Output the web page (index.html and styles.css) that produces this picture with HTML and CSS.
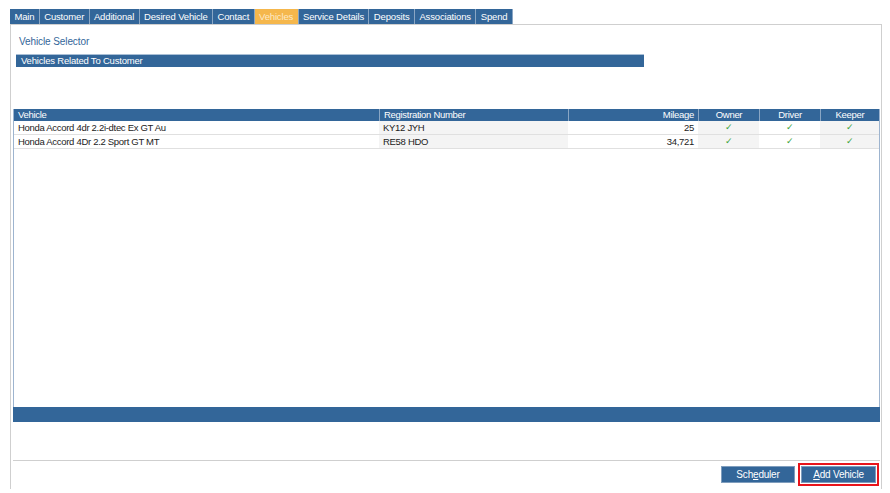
FILE: index.html
```html
<!DOCTYPE html>
<html>
<head>
<meta charset="utf-8">
<link rel="stylesheet" href="styles.css">
</head>
<body>
<div class="page">
  <div class="tabs">
    <div class="tab">Main</div>
    <div class="tab">Customer</div>
    <div class="tab">Additional</div>
    <div class="tab">Desired Vehicle</div>
    <div class="tab">Contact</div>
    <div class="tab active">Vehicles</div>
    <div class="tab">Service Details</div>
    <div class="tab">Deposits</div>
    <div class="tab">Associations</div>
    <div class="tab">Spend</div>
  </div>
  <div class="panel">
    <div class="title">Vehicle Selector</div>
    <div class="section">Vehicles Related To Customer</div>
    <div class="grid">
      <div class="row head">
        <div class="c c1">Vehicle</div>
        <div class="c c2">Registration Number</div>
        <div class="c c3">Mileage</div>
        <div class="c c4">Owner</div>
        <div class="c c5">Driver</div>
        <div class="c c6">Keeper</div>
      </div>
      <div class="row">
        <div class="c c1">Honda Accord 4dr 2.2i-dtec Ex GT Au</div>
        <div class="c c2 alt">KY12 JYH</div>
        <div class="c c3">25</div>
        <div class="c c4 alt chk">&#10003;</div>
        <div class="c c5 chk">&#10003;</div>
        <div class="c c6 alt chk">&#10003;</div>
      </div>
      <div class="row">
        <div class="c c1">Honda Accord 4Dr 2.2 Sport GT MT</div>
        <div class="c c2 alt">RE58 HDO</div>
        <div class="c c3">34,721</div>
        <div class="c c4 alt chk">&#10003;</div>
        <div class="c c5 chk">&#10003;</div>
        <div class="c c6 alt chk">&#10003;</div>
      </div>
      <div class="spacer"></div>
      <div class="foot"></div>
    </div>
    <div class="actions">
      <div class="btn">Sch<u>e</u>duler</div>
      <div class="focus"><div class="btn"><u>A</u>dd Vehicle</div></div>
    </div>
  </div>
</div>
</body>
</html>
```
FILE: styles.css
```css
* { box-sizing: border-box; }
html, body { margin: 0; padding: 0; background: #fff; }
body {
  font-family: "Liberation Sans", Arial, sans-serif;
  font-size: 9.5px;
  letter-spacing: -0.3px;
  color: #222;
  width: 890px;
  height: 493px;
  overflow: hidden;
}
.page { padding: 9px 0 0 10px; }
.tabs { display: flex; height: 15px; }
.tab {
  background: #336699;
  color: #fff;
  padding: 0 4.4px;
  line-height: 15px;
  border-right: 1px solid #8aa6c4;
  letter-spacing: -0.15px;
  font-size: 9.5px;
}
.tab.active { background: #f5b74c; color: #fde9c6; }
.panel {
  width: 872px;
  height: 465px;
  border: 1px solid #cfcfcf;
  border-bottom: none;
  padding: 0 1px 0 2px;
  display: flex;
  flex-direction: column;
}
.title {
  color: #336699;
  font-size: 10px;
  letter-spacing: -0.1px;
  margin: 10px 0 0 6px;
  line-height: 13px;
  height: 19px;
}
.section {
  margin-left: 3px;
  width: 628px;
  height: 13px;
  background: #336699;
  border-top: 1px solid #a9bfd6;
  color: #fff;
  line-height: 12px;
  padding-left: 5px;
  font-size: 9.5px;
  letter-spacing: -0.2px;
}
.grid {
  margin-top: 42px;
  height: 313px;
  display: flex;
  flex-direction: column;
  border-left: 1px solid #9db4cf;
  border-right: 1px solid #9db4cf;
}
.row { display: flex; height: 14px; border-bottom: 1px solid #e0e0e0; }
.row.head { height: 12px; background: #336699; color: #fff; border-bottom: none; }
.c { line-height: 13px; padding: 0 4px; white-space: nowrap; overflow: hidden; }
.head .c { line-height: 12px; border-left: 1px solid #8aa6c4; }
.head .c1 { border-left: none; }
.c1 { width: 365px; }
.c2 { width: 189px; }
.c3 { width: 130px; text-align: right; }
.c4 { width: 61px; text-align: center; }
.c5 { width: 61px; text-align: center; }
.c6 { flex: 1; text-align: center; }
.alt { background: #f4f4f4; }
.chk { color: #3aa33a; font-size: 9px; }
.spacer { flex: 1; }
.foot { height: 15px; background: #336699; margin-left: -1px; margin-right: -1px; }
.actions {
  margin-top: 38px;
  border-top: 1px solid #cfcfcf;
  display: flex;
  justify-content: flex-end;
  align-items: center;
  padding-top: 1px;
  gap: 3px;
}
.btn {
  background: #336699;
  color: #fff;
  height: 17px;
  line-height: 16px;
  text-align: center;
  font-size: 10px;
  letter-spacing: -0.2px;
  width: 74px;
  border: 1px solid #7f9dbd;
}
.actions > .btn { margin-top: 1px; }
.focus { border: 2px solid #e8141b; padding: 1px; margin-right: 1px; margin-top: 1px; }
.focus .btn { width: 75px; }
```
